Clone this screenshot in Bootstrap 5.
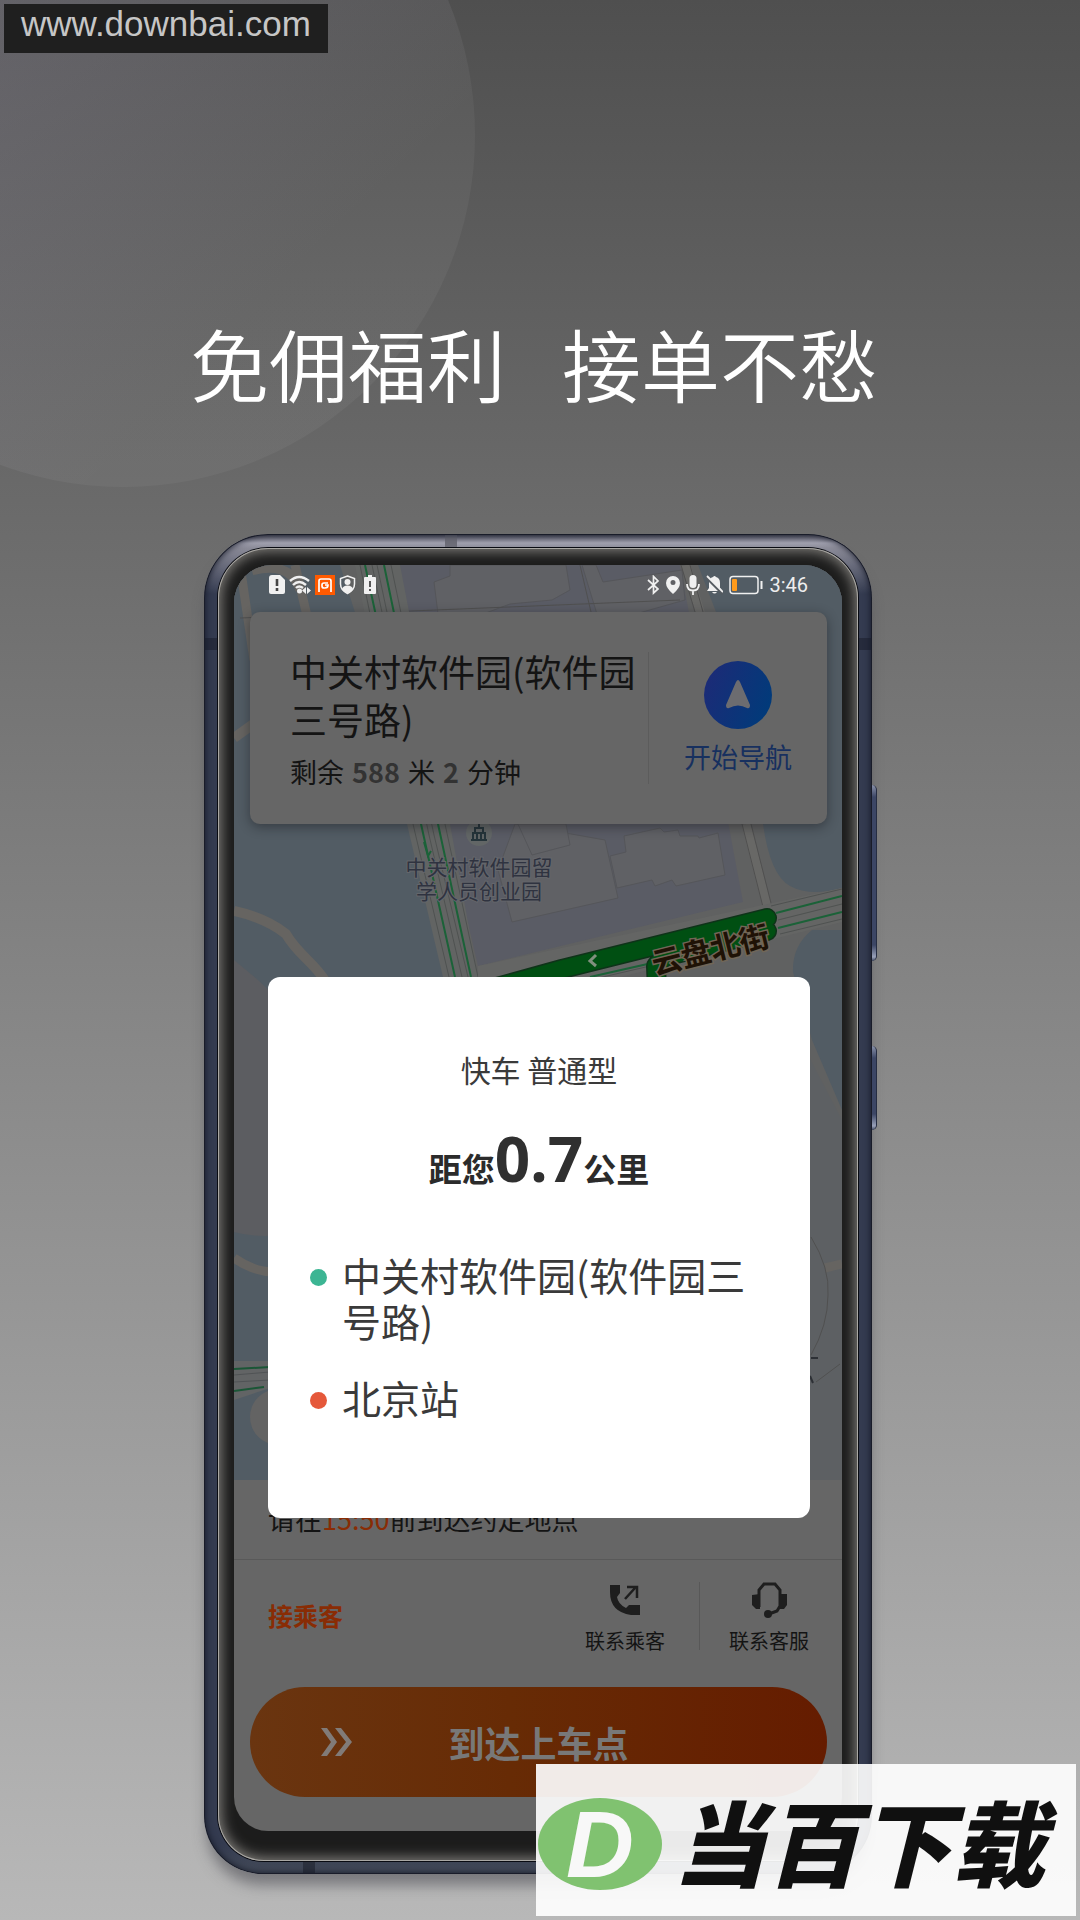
<!DOCTYPE html>
<html lang="zh-CN">
<head>
<meta charset="utf-8">
<meta name="viewport" content="width=device-width, initial-scale=1">
<title>免佣福利 接单不愁</title>
<link href="https://cdn.jsdelivr.net/npm/bootstrap@5.3.0/dist/css/bootstrap.min.css" rel="stylesheet">
<style>
  body {
    font-family: "Noto Sans CJK SC", sans-serif;
    background: linear-gradient(#4f4f4f 0, #6b6b6b 27%, #848484 51%, #a9a9a9 86%, #b8b8b8 100%);
    overflow-x: hidden;
  }
  .glow {
    width: 704px; height: 704px; left: -229px; top: -217px; border-radius: 50%;
    background: linear-gradient(135deg, rgba(150,145,165,.28) 32%, rgba(255,255,255,.045) 72%);
  }
  .site-tag { left: 4px; top: 4px; padding: 2px 17px 12px; background: #1f1f1f; color: #c6c6c6; font: 35px/35px "Liberation Sans", sans-serif; }
  .promo { padding: 323px 208px 46px 204px; }
  .promo-title { gap: 56px; margin-bottom: 131px; padding-right: 8px; font-size: 79px; line-height: 80px; font-weight: 350; color: #fff; white-space: nowrap; }

  /* handset */
  .handset {
    padding: 14px 14px 13px; border-radius: 64px 64px 58px 58px;
    background:
      linear-gradient(#6d6d78, #6d6d78) 241px 0 / 12px 14px no-repeat,
      linear-gradient(#262b3c, #262b3c) 0 104px / 100% 12px no-repeat,
      linear-gradient(#2c313e, #2c313e) 99px 100% / 12px 13px no-repeat,
      linear-gradient(#4c4c5a 0, #a0a0ae 9px, #8b8b98 14px, #343b50 60px, #343b50 calc(100% - 30px), #454c5a 100%);
    box-shadow: inset 0 0 0 1px #191c29, inset 0 0 7px 1px #141826, 0 14px 14px -3px rgba(70,70,76,.55);
  }
  .side-key { left: 100%; width: 5px; border-radius: 0 5px 5px 0; background: linear-gradient(#8a92aa, #3c4665 12px, #3c4665 calc(100% - 16px), #9aa2ba calc(100% - 4px), #39415a); border-right: 1px solid #262d42; }
  .key-volume { top: 251px; height: 176px; }
  .key-power { top: 512px; height: 84px; }
  .bezel {
    padding: 17px 16px 30px; border-radius: 50px 50px 46px 46px; background: #1c1c1c;
    box-shadow: 0 0 0 1px #090b12, inset 0 0 0 1px #aaa8a4, inset 0 0 13px 3px #85837f;
  }
  .screen { border-radius: 38px 38px 34px 34px; background: #666; overflow: hidden; color: #141414; }
  .map-area { height: 915px; background: #525c64; }
  .status-bar { height: 47px; padding: 0 34px 0 35px; font: 20px/26px "Roboto", "Noto Sans CJK SC", sans-serif; color: #eee; }
  .status-bar svg { display: block; }
  .status-right { gap: 6px; }

  .nav-card { margin: 0 15px 0 16px; height: 212px; border-radius: 10px; background: #666; box-shadow: 0 3px 12px rgba(20,20,24,.45); }
  .nav-place { padding: 35px 0 0 40px; width: 398px; }
  .place-name { font-size: 37px; line-height: 48px; margin-bottom: 11px; font-weight: 400; }
  .trip-left { font-size: 27px; line-height: 36px; }
  .trip-left strong { color: #333; margin: 0 2px; }
  .nav-rule { width: 1px; height: 132px; background: #5c5c5c; }
  .nav-go { padding-top: 49px; gap: 10px; color: #17305f; font-size: 27px; line-height: 36px; background: none; border: 0; }

  .remind { padding: 19px 34px 20px; font-size: 27px; line-height: 40px; border-bottom: 1px solid #595959; }
  .accent { color: #892c04; }
  .act-row { padding: 22px 33px 32px 34px; }
  .stage { font-size: 25px; line-height: 36px; padding-top: 15px; font-weight: 700; }
  .act { border: 0; background: none; padding: 0; font-size: 20px; line-height: 28px; color: #141414; gap: 9px; }
  .act-rule { width: 1px; height: 68px; background: #585858; margin: 0 29px 0 34px; }
  .arrive { width: calc(100% - 31px); margin: 0 15px 34px 16px; height: 110px; border: 0; border-radius: 55px; background: linear-gradient(90deg, #6a3510, #672b05 45%, #651c00); color: #787878; font-size: 36px; line-height: 48px; font-weight: 700; }
  .arrive svg { left: 71px; top: 40px; }

  /* order dialog */
  .order { left: 34px; right: 32px; top: 412px; padding: 72px 42px 98px; border-radius: 12px; background: #fff; color: #3a3a3a; }
  .order-type { font-size: 30px; line-height: 40px; }
  .order-far { font-size: 33px; line-height: 72px; margin: 43px 0 47px; font-weight: 700; color: #2b2b2b; }
  .order-far b { font: 700 62px/40px "Noto Sans", sans-serif; color: #303030; }
  .stops { gap: 31px; font-size: 39px; line-height: 46px; }
  .stops li { gap: 15px; }
  .stop-dot { flex: none; width: 17px; height: 17px; border-radius: 50%; margin-top: 18px; background: #3cb593; }
  .stop-end { background: #e5583a; }

  .brand-tag { right: 4px; bottom: 4px; width: 540px; height: 152px; padding-left: 2px; gap: 10px; background: rgba(255,255,255,.91); color: #101010; overflow: hidden; }
  .brand-name { font-size: 93px; line-height: 140px; font-weight: 900; font-style: italic; white-space: nowrap; }
</style>
</head>
<body class="position-relative min-vh-100">
<div class="glow position-absolute"></div>
<main class="promo position-relative">
  <h1 class="promo-title d-flex justify-content-center"><span>免佣福利</span><span>接单不愁</span></h1>

  <div class="handset position-relative">
    <span class="side-key key-volume position-absolute"></span>
    <span class="side-key key-power position-absolute"></span>
    <div class="bezel">
      <div class="screen position-relative">
        <section class="map-area position-relative overflow-hidden">
          <svg class="position-absolute top-0 start-0 w-100 h-100" viewBox="234 565 608 915" preserveAspectRatio="xMidYMin slice" aria-label="地图">
            <rect x="234" y="565" width="608" height="915" fill="#525c64"/>
            <!-- districts -->
            <path d="M234 960L258 980 300 1020V1232Q262 1240 234 1232Z" fill="#5c5d61"/>
            <path d="M340 565H698L716 612 763 824Q770 875 790 886T842 888V930H812Q792 946 793 972L812 1040 842 1110V1480H400L470 977Z" fill="#606161"/>
            <path d="M384 565H680L743 902 478 966Z" fill="#5a5c65"/>
            <path d="M795 1030L842 1120V1480H780Z" fill="#5d6063"/>
            <!-- buildings -->
            <g fill="#606165" stroke="#55565a" stroke-width="1">
              <path d="M450 565H566L570 590 552 600 510 604 440 630 434 582 450 576Z"/>
              <path d="M582 565H596L603 582 682 570 685 600 600 624Z"/>
              <path d="M515 824L605 840 618 898 512 922 498 870Z"/>
              <path d="M518 824L566 824 570 845 532 855Z"/>
              <path d="M610 856L626 852 624 836 660 828 664 832 678 830 680 836 698 836 699 838 718 833 725 875 676 886 672 880 655 886 652 880 617 888Z"/>
            </g>
            <!-- minor roads -->
            <g fill="none" stroke="#666461" stroke-width="9">
              <path d="M240 565L254 660M295 565L308 620M252 571Q290 560 300 590"/>
              <path d="M234 738L256 722M234 911Q266 918 286 934C298 955 314 962 326 982" stroke-width="10"/>
              <path d="M234 1258Q254 1272 274 1272M825 1268L842 1264" stroke-width="9"/>
              <path d="M746 824L768 910M686 565L704 625" stroke="#686866"/>
            </g>
            <g fill="none" stroke="#505050" stroke-width="1">
              <path d="M742 824L763 907M751 824L772 907M580 565L591 612M681 565L695 612M690 565L703 612M240 618L680 600"/>
              <path d="M811 1237Q830 1268 828 1295 828 1325 811 1355M816 1382L840 1364"/>
            </g>
            <path d="M811 1358H818M810 1376L813 1383" stroke="#2d3035" stroke-width="2"/>
            <!-- avenue -->
            <path d="M355 565L407 824 443 977H478L450 824 400 565Z" fill="#626463"/>
            <path d="M360 565L413 824 449 977M372 565L429 835 462 977M377 565L434 835 468 977M391 565L445 824 478 977" fill="none" stroke="#4f5251"/>
            <path d="M365 565L421 824 455 977M384 565L438 824 471 977" fill="none" stroke="#1b6238" stroke-width="2"/>
            <path d="M424 842L428 856 431 851" fill="none" stroke="#1b6238" stroke-width="2"/>
            <!-- cross street -->
            <path d="M478 966L842 888V922L600 982H478Z" fill="#646564"/>
            <path d="M771 906L842 889M778 920L842 904M780 934L842 919M590 980L650 966" fill="none" stroke="#4f5251"/>
            <path d="M776 913L842 896M778 928L842 912M590 977L652 963" fill="none" stroke="#1b6238" stroke-width="2"/>
            <g fill="none" stroke-linejoin="round" stroke-linecap="round">
              <path d="M490 989L562 969 767 918M657 990L656 966 664 957 767 931" stroke="#0e3319" stroke-width="20"/>
              <path d="M490 989L562 969 767 918M657 990L656 966 664 957 767 931" stroke="#004f12" stroke-width="17"/>
            </g>
            <path d="M596 955L590 961 596 966" fill="none" stroke="#81907f" stroke-width="3"/>
            <text transform="translate(655 975) rotate(-14)" font-size="30" font-weight="700" fill="#1f1206" stroke="#716656" stroke-width="3" paint-order="stroke">云盘北街</text>
            <!-- west street -->
            <path d="M234 1361H270V1388L234 1400Z" fill="#626465"/>
            <path d="M234 1375L270 1372M234 1382L270 1380" stroke="#505355"/>
            <path d="M234 1369L270 1367M234 1391L264 1387" stroke="#1b5636" stroke-width="2"/>
            <circle cx="278" cy="1417" r="28" fill="#636363"/>
            <!-- place marker -->
            <circle cx="479" cy="833" r="13" fill="#626666"/>
            <path d="M471 840H487M473 840V833H485V840M475 833V828H483V833M479 824V828M477 833V840M481 833V840" fill="none" stroke="#25343a" stroke-width="2"/>
            <g font-size="21" text-anchor="middle" fill="#2f3340" stroke="#64666b" stroke-width="2" paint-order="stroke">
              <text x="479" y="875">中关村软件园留</text><text x="479" y="899">学人员创业园</text>
            </g>
          </svg>

          <div class="status-bar position-relative d-flex align-items-center justify-content-between pb-2">
            <div class="d-flex align-items-center gap-1">
              <svg width="16" height="20" viewBox="0 0 16 20"><path d="M3 0H11L16 5V17Q16 19 14 19H2Q0 19 0 17V3Q0 0 3 0Z" fill="#f0f0f0"/><path d="M8 4V11M8 13V16" stroke="#444" stroke-width="2.6"/></svg>
              <svg width="22" height="20" viewBox="0 0 22 20"><g fill="none" stroke="#f0f0f0" stroke-width="2.4"><path d="M1 6Q10 -2 20 6M4 10Q10 4 17 10M7 13Q10 10 14 13"/></g><circle cx="10.500" cy="16" r="2.500" fill="#f0f0f0"/><path d="M17 12V19L13 15.500ZM18 12V19L22 15.500Z" fill="#f0f0f0"/></svg>
              <svg width="20" height="20" viewBox="0 0 20 20"><path d="M0 0H20V20H0Z" fill="#ff5a00"/><path d="M4 17V6Q4 4 6 4H14Q16 4 16 6V17M13 8H9Q7 8 7 10V11Q7 13 9 13H10Q13 13 13 10H10" fill="none" stroke="#fff" stroke-width="1.700"/></svg>
              <svg width="17" height="20" viewBox="0 0 17 20"><path d="M8.500 1L15.500 3.500V9Q15.500 15 8.500 18.500 1.500 15 1.500 9V3.500Z" fill="none" stroke="#f0f0f0" stroke-width="1.500"/><circle cx="8.500" cy="7" r="3" fill="#f0f0f0"/><path d="M3 14Q4 10.500 8.500 10.500T14 14Q12 17 8.500 18 5 17 3 14Z" fill="#f0f0f0"/></svg>
              <svg class="ms-1" width="12" height="20" viewBox="0 0 12 20"><path d="M4 0H8V2H11Q12 2 12 3V18Q12 19 11 19H1Q0 19 0 18V3Q0 2 1 2H4Z" fill="#f0f0f0"/><path d="M6 6V12M6 14V16" stroke="#444" stroke-width="1.800"/></svg>
            </div>
            <div class="status-right d-flex align-items-center">
              <svg width="13" height="20" viewBox="0 0 13 20"><path d="M1 5L11 14 6.500 18V1.500L11 6 1 15" fill="none" stroke="#f0f0f0" stroke-width="1.700"/></svg>
              <svg width="14" height="20" viewBox="0 0 14 20"><path d="M7 1A7 7 0 0 1 14 8Q14 13 7 19 0 13 0 8A7 7 0 0 1 7 1ZM7 5A2.500 2.500 0 0 0 7 10 2.500 2.500 0 0 0 7 5Z" fill="#f0f0f0" fill-rule="evenodd"/></svg>
              <svg width="14" height="20" viewBox="0 0 14 20"><rect x="3.500" y="0" width="7" height="13" rx="3.500" fill="#f0f0f0"/><path d="M1 9Q1 15.500 7 15.500T13 9M7 15V20" fill="none" stroke="#f0f0f0" stroke-width="1.800"/></svg>
              <svg width="17" height="20" viewBox="0 0 17 20"><path d="M1 16L3 13V8Q3 3 7 2 8.500 0 10 2 14 3 14 8V13L16 16ZM6 17H11Q8.500 20 6 17Z" fill="#f0f0f0"/><path d="M0 2L17 19" stroke="#555b61" stroke-width="3"/><path d="M1 1L17 17" stroke="#f0f0f0" stroke-width="1.800"/></svg>
              <svg width="34" height="20" viewBox="0 0 34 20"><rect x="1" y="1.500" width="28" height="17" rx="3" fill="none" stroke="#f0f0f0" stroke-width="1.500"/><rect x="3" y="4" width="5" height="12" rx="1" fill="#ff9b1c"/><path d="M32.500 6V14" stroke="#f0f0f0" stroke-width="2"/></svg>
              <span>3:46</span>
            </div>
          </div>

          <div class="nav-card position-relative d-flex">
            <div class="nav-place">
              <h2 class="place-name">中关村软件园(软件园三号路)</h2>
              <div class="trip-left">剩余 <strong>588</strong> 米 <strong>2</strong> 分钟</div>
            </div>
            <span class="nav-rule align-self-center"></span>
            <button type="button" class="nav-go flex-fill d-flex flex-column align-items-center">
              <svg width="68" height="68" viewBox="0 0 68 68"><defs><linearGradient id="dial" x1="0" y1=".3" x2="1" y2=".7"><stop offset="0" stop-color="#1c2b77"/><stop offset="1" stop-color="#003b7a"/></linearGradient></defs><circle cx="34" cy="34" r="34" fill="url(#dial)"/><path d="M32 21Q34 17 36 21L46 44Q46 48 43 47 34 42 25 47 22 48 22 44Z" fill="#6c6c70"/></svg>
              <span>开始导航</span>
            </button>
          </div>
        </section>

        <p class="remind mb-0">请在<span class="accent">15:50</span>前到达约定地点</p>
        <div class="act-row d-flex align-items-start">
          <span class="stage accent me-auto">接乘客</span>
          <button type="button" class="act d-flex flex-column align-items-center">
            <svg width="36" height="36" viewBox="0 0 36 36"><path d="M3 3H13V11L10 15Q11 22 19 26L22 23H33V33H24Q3 30 3 10Z" fill="#1e1e1e"/><path d="M18 17L28 6M20 5H30V16" fill="none" stroke="#1e1e1e" stroke-width="2.500"/></svg>
            <span>联系乘客</span>
          </button>
          <span class="act-rule"></span>
          <button type="button" class="act d-flex flex-column align-items-center">
            <svg width="36" height="36" viewBox="0 0 36 36"><path d="M8 25V8L13 2H24L29 8V24L26 29 18 32" fill="none" stroke="#1e1e1e" stroke-width="3"/><path d="M9 12V27H5L1 23V13ZM28 12H36V23L33 27H28Z" fill="#1e1e1e"/><circle cx="17" cy="32" r="4" fill="#1e1e1e"/></svg>
            <span>联系客服</span>
          </button>
        </div>
        <button type="button" class="arrive d-block position-relative">
          <svg class="position-absolute" width="32" height="30" viewBox="0 0 32 30" fill="#817b78"><path d="M0 1H6L16 15 6 29H0L10 15Z"/><path d="M14 1H20L31 15 20 29H14L25 15Z"/></svg>
          到达上车点
        </button>

        <div class="order position-absolute" role="dialog" aria-label="新订单">
          <div class="order-type text-center">快车 普通型</div>
          <div class="order-far text-center">距您<b>0.7</b>公里</div>
          <ul class="stops list-unstyled d-flex flex-column mb-0">
            <li class="d-flex"><span class="stop-dot"></span><span>中关村软件园(软件园三号路)</span></li>
            <li class="d-flex"><span class="stop-dot stop-end"></span><span>北京站</span></li>
          </ul>
        </div>
      </div>
    </div>
  </div>
</main>

<a href="#" class="site-tag position-absolute text-decoration-none">www.downbai.com</a>
<div class="brand-tag position-absolute d-flex align-items-center">
  <svg class="flex-shrink-0 mt-2" width="125" height="92" viewBox="0 0 125 92"><ellipse cx="62" cy="46" rx="62" ry="46" fill="#80c270"/><text x="62" y="79" text-anchor="middle" font-family="Liberation Sans" font-size="94" font-weight="700" font-style="italic" fill="#f8f8f8">D</text></svg>
  <span class="brand-name">当百下载</span>
</div>
<script src="https://cdn.jsdelivr.net/npm/bootstrap@5.3.0/dist/js/bootstrap.bundle.min.js"></script>
</body>
</html>
